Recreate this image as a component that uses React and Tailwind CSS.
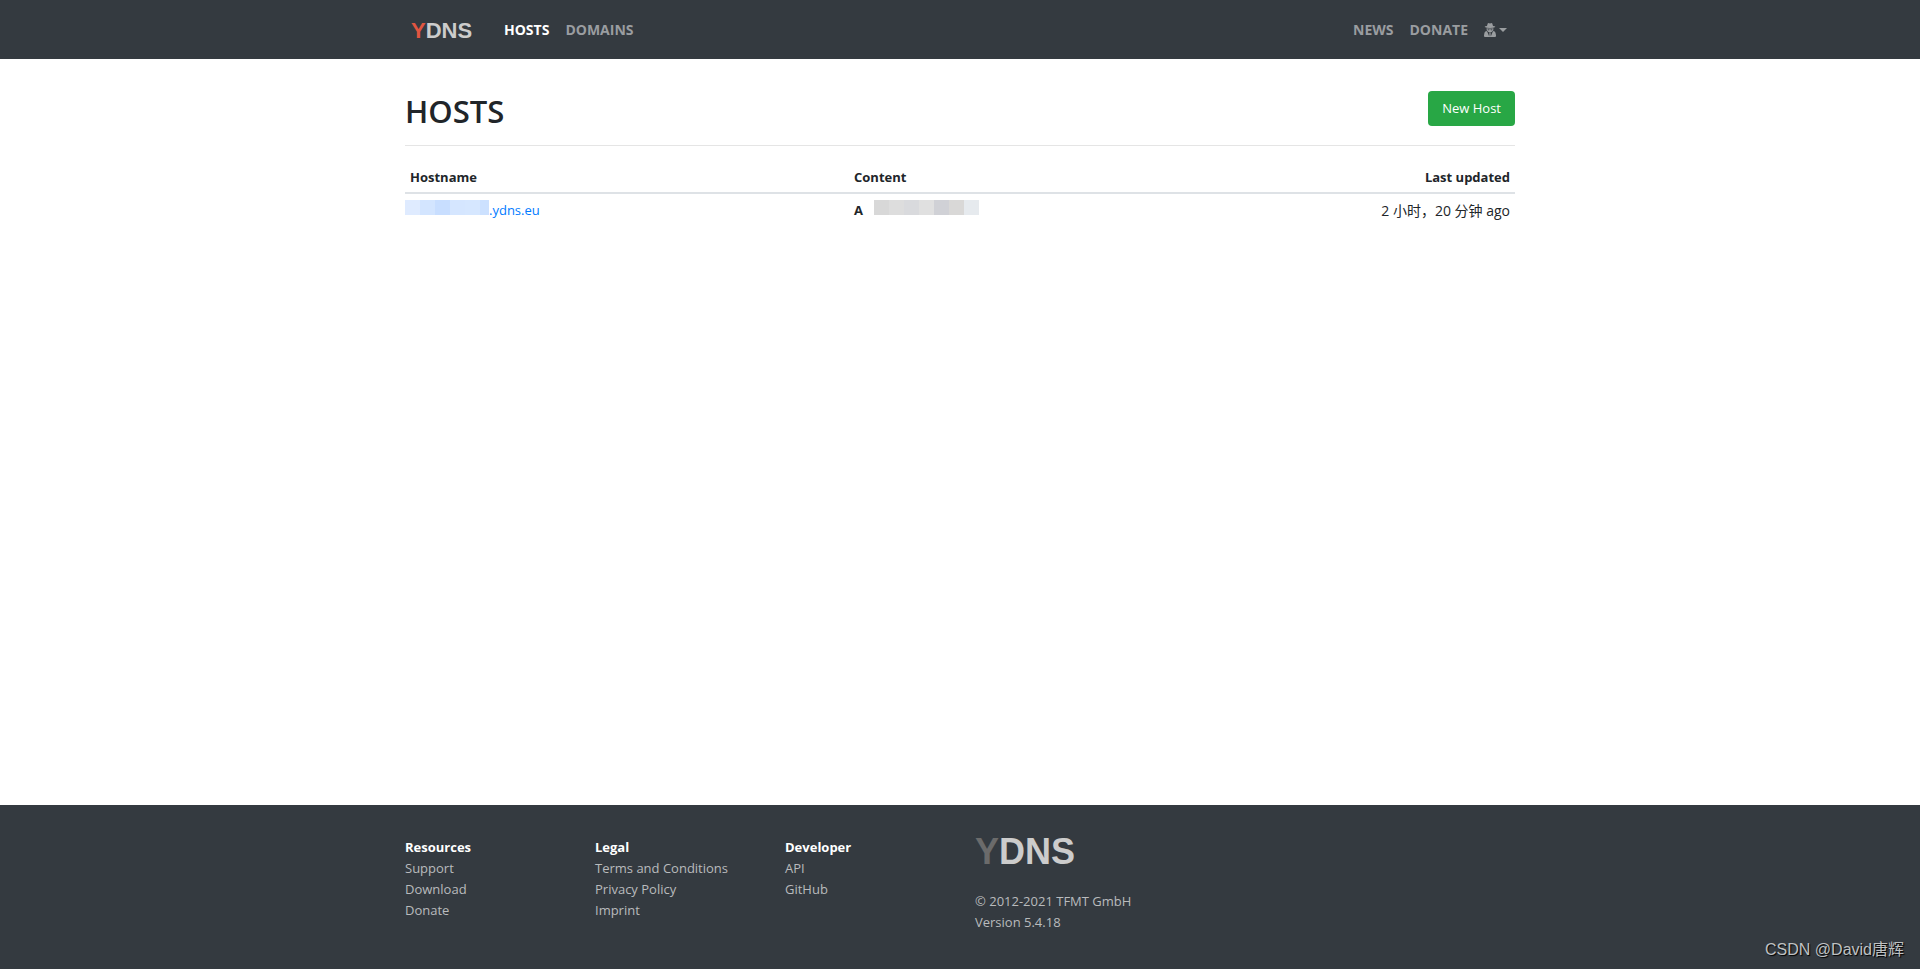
const footerColumns = [
  { title: "Resources", links: ["Support", "Download", "Donate"] },
  { title: "Legal", links: ["Terms and Conditions", "Privacy Policy", "Imprint"] },
  { title: "Developer", links: ["API", "GitHub"] },
];

function SpyIcon() {
  return (
    <svg viewBox="0 0 12 14" fill="currentColor" fillRule="evenodd" className="h-[14px] w-3" aria-hidden="true">
      {/* hat */}
      <path d="M3 3 3.7.6Q4.3-.2 5.2.3L6 .6 6.8.3Q7.7-.2 8.3.6L9 3Q11.2 3.3 11.4 3.9 9.5 5 6 5T.6 3.9Q.8 3.3 3 3Z" />
      {/* face and glasses */}
      <path d="M2.6 5.2Q6 6 9.4 5.2L9.3 7Q8.4 9.4 6 9.4T2.7 7ZM3.5 6.2 4 7.3H5.2L5.7 6.4ZM6.3 6.4 6.8 7.3H8L8.5 6.2Z" />
      {/* coat and tie */}
      <path d="M2.2 7.8 3.4 9 5.2 13.4 5.5 10.6 5 9.8H7L6.5 10.6 6.8 13.4 8.6 9 9.8 7.8Q12 9 12 12.2V13Q12 14 11 14H1Q0 14 0 13V12.2Q0 9 2.2 7.8Z" />
    </svg>
  );
}

function Navbar() {
  return (
    <nav className="bg-[#343a40] text-sm font-bold text-[#9a9da0]">
      <div className="mx-auto flex h-[59px] max-w-[1140px] items-center px-[15px]">
        <a
          href="#"
          className="mr-4 w-[75px] pt-[3px] pl-[6px] font-['Liberation_Sans',sans-serif] text-[22px] leading-8 text-[#cccccc]"
        >
          <span className="text-[#e05541]">Y</span>DNS
        </a>
        <a href="#" className="px-2 text-white">HOSTS</a>
        <a href="#" className="px-2">DOMAINS</a>

        {/* Right side */}
        <div className="ml-auto flex items-center">
          <a href="#" className="px-2">NEWS</a>
          <a href="#" className="px-2">DONATE</a>
          <button aria-label="Account" className="flex items-center gap-[3px] px-2">
            <SpyIcon />
            <span className="border-x-4 border-t-4 border-x-transparent border-t-[#9a9da0]" />
          </button>
        </div>
      </div>
    </nav>
  );
}

// Masked part of the hostname
function HiddenHost() {
  return (
    <span className="flex h-[15px]">
      <span className="w-[15px] bg-[#dfebff]" />
      <span className="w-[15px] bg-[#d3e5ff]" />
      <span className="w-[15px] bg-[#c8deff]" />
      <span className="w-[15px] bg-[#d5e6ff]" />
      <span className="w-[15px] bg-[#d6e7ff]" />
      <span className="w-[9px] bg-[#cce1ff]" />
    </span>
  );
}

// Masked IP address
function HiddenAddress() {
  return (
    <span className="flex h-[15px]">
      <span className="w-[15px] bg-[#d8d8d8]" />
      <span className="w-[15px] bg-[#dddddd]" />
      <span className="w-[15px] bg-[#d9dadd]" />
      <span className="w-[15px] bg-[#e0e0e0]" />
      <span className="w-[15px] bg-[#d0d1d6]" />
      <span className="w-[15px] bg-[#d9d8d7]" />
      <span className="w-[15px] bg-[#e6eaee]" />
    </span>
  );
}

function HostsTable() {
  return (
    <table className="w-full table-fixed">
      <thead>
        <tr className="border-b-2 border-[#dee2e6] text-left">
          <th className="w-[40%] px-[5px] pt-[5px] pb-1">Hostname</th>
          <th className="px-[5px] pt-[5px] pb-1">Content</th>
          <th className="px-[5px] pt-[5px] pb-1 text-right">Last updated</th>
        </tr>
      </thead>
      <tbody>
        <tr>
          <td className="py-[6px]">
            <a href="#" className="flex text-[#007bff]">
              <HiddenHost />
              .ydns.eu
            </a>
          </td>
          <td className="px-[5px] py-[6px]">
            <div className="flex gap-[11px]">
              <b>A</b>
              <HiddenAddress />
            </div>
          </td>
          <td className="px-[5px] py-[6px] text-right text-sm leading-[21px]">2 小时，20 分钟 ago</td>
        </tr>
      </tbody>
    </table>
  );
}

function Footer() {
  return (
    <footer className="relative mt-auto bg-[#343a40] text-[#b9bbbd]">
      <div className="mx-auto grid max-w-[1140px] grid-cols-6 gap-x-[30px] px-[15px] pt-8 pb-9">
        {footerColumns.map((column) => (
          <div key={column.title}>
            <h2 className="font-bold text-white">{column.title}</h2>
            <ul>
              {column.links.map((link) => (
                <li key={link}>
                  <a href="#">{link}</a>
                </li>
              ))}
            </ul>
          </div>
        ))}
        <div className="col-span-3">
          <div className="mb-6 font-['Liberation_Sans',sans-serif] text-4xl leading-[30px] font-bold text-[#cccccc]">
            <span className="text-[#6b6b6b]">Y</span>DNS
          </div>
          <p>© 2012-2021 TFMT GmbH</p>
          <p>Version 5.4.18</p>
        </div>
      </div>
      <div className="absolute right-4 bottom-[7px] font-['Liberation_Sans','Noto_Sans_CJK_SC',sans-serif] text-base text-[#bfc1c3] [text-shadow:1px_1px_1px_#000]">
        CSDN @David唐辉
      </div>
    </footer>
  );
}

export default function App() {
  return (
    <div className="flex min-h-screen flex-col bg-white font-['Open_Sans','Noto_Sans_CJK_SC',sans-serif] text-[13px] leading-[21px] text-[#212529]">
      <Navbar />
      <main className="mx-auto w-full max-w-[1140px] px-[15px] pt-8">
        <div className="mb-4 flex items-start justify-between border-b border-[#e5e5e5] pb-[14px]">
          <h1 className="text-[31px] leading-10 font-semibold">HOSTS</h1>
          <button className="h-[35px] rounded bg-[#28a745] px-[14px] text-white">New Host</button>
        </div>
        <HostsTable />
      </main>
      <Footer />
    </div>
  );
}
